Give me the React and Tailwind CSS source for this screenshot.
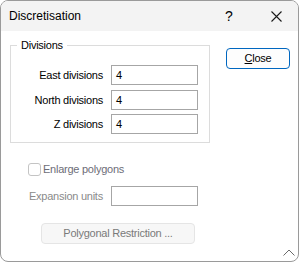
export default function App() {
  const body = { fontFamily: '"Liberation Sans", Arial, sans-serif' };
  return (
    <div className="w-[300px] h-[263px] bg-white" style={body}>
      <div className="w-[299px] h-[262px] border border-[#9a9a9a] rounded-[8px] overflow-hidden flex flex-col bg-white">
        <div className="h-[30px] bg-[#f3f3f3] flex items-center pl-[8px] shrink-0">
          <span className="text-[12px] text-black flex-1">Discretisation</span>
          <span className="text-[14px] text-black w-[14px] text-center mr-[35px]">?</span>
          <svg width="11" height="11" viewBox="0 0 11 11" className="mr-[16px]">
            <path d="M0.5 0.5 L10.5 10.5 M10.5 0.5 L0.5 10.5" stroke="#1a1a1a" strokeWidth="1.1" fill="none" />
          </svg>
        </div>
        <div className="flex-1 relative flex pl-[9px] tracking-[-0.25px]">
          <div className="flex flex-col w-[200px]">
            <div className="relative mt-[14px] h-[98px] border border-[#dcdcdc] pt-[19px] pl-0 pr-[11px] pb-[8px]">
              <span className="absolute left-[6px] top-[-8px] bg-white px-[4px] text-[11px] leading-[14px] text-black">Divisions</span>
              <div className="grid grid-cols-[92px_87px] gap-x-[8px] items-center">
                <span className="text-[11px] text-right text-black">East divisions</span>
                <div className="h-[20px] border border-[#a6a6a6] flex items-center pl-[4px] text-[11px] text-black">4</div>
                <span className="text-[11px] text-right text-black mt-[5px]">North divisions</span>
                <div className="h-[20px] border border-[#a6a6a6] flex items-center pl-[4px] text-[11px] text-black mt-[5px]">4</div>
                <span className="text-[11px] text-right text-black mt-[4px]">Z divisions</span>
                <div className="h-[20px] border border-[#a6a6a6] flex items-center pl-[4px] text-[11px] text-black mt-[4px]">4</div>
              </div>
            </div>
            <div className="flex items-center mt-[20px] ml-[18px] h-[13px]">
              <div className="w-[13px] h-[13px] rounded-[3px] border border-[#c4c4c4] bg-white" />
              <span className="text-[11px] text-[#6d6d78] ml-[2px]">Enlarge polygons</span>
            </div>
            <div className="flex items-center mt-[10px] h-[20px]">
              <span className="text-[11px] text-[#8a8a8a] ml-[19px] w-[82px]">Expansion units</span>
              <div className="h-[20px] w-[87px] border border-[#a6a6a6]" />
            </div>
            <div className="mt-[17px] ml-[31px] w-[154px] h-[21px] rounded-[4px] border border-[#e5e5e5] bg-[#f7f7f7] flex items-center justify-center text-[11px] text-[#7a7a7a]">
              Polygonal Restriction ...
            </div>
          </div>
          <div className="ml-[16px] mt-[17px]">
            <div className="w-[64px] h-[21px] rounded-[4px] border border-[#0067c0] bg-[#fdfdfd] flex items-center justify-center text-[11px] text-black">
              <span><span className="underline">C</span>lose</span>
            </div>
          </div>
          <svg width="12" height="7" viewBox="0 0 12 7" className="absolute right-[3px] bottom-[5px]">
            <path d="M0.5 6.5 L6 1 L11.5 6.5" stroke="#6a6a6a" strokeWidth="1" fill="none" />
          </svg>
        </div>
      </div>
    </div>
  );
}
